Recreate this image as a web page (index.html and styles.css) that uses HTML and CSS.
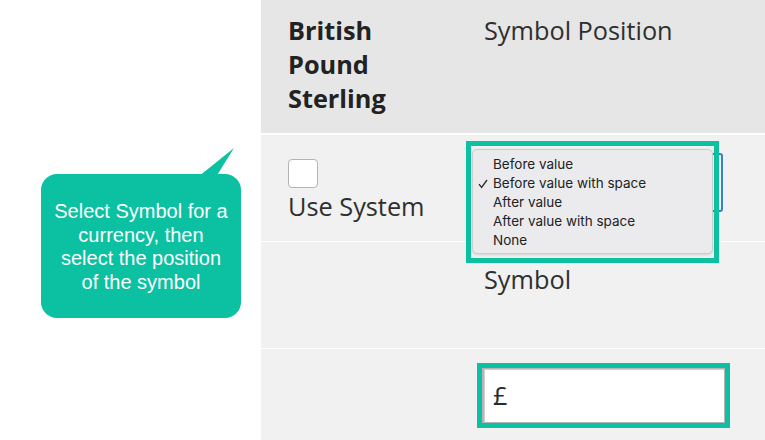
FILE: index.html
```html
<!DOCTYPE html>
<html>
<head>
<meta charset="utf-8">
<link rel="stylesheet" href="styles.css">
</head>
<body>
<div class="page">
  <div class="annot">
    <div class="bubble">
      <svg class="tail" width="40" height="32" viewBox="0 0 40 32"><polygon points="0.7,32 38,2 19.3,32" fill="#0bc1a1"/></svg>
      <p class="bubble-text">Select Symbol for a<br>currency, then<br>select the position<br>of the symbol</p>
    </div>
  </div>
  <div class="table">
    <div class="row head">
      <div class="cell c1"><div class="name">British Pound Sterling</div></div>
      <div class="cell c2"><div class="lbl">Symbol Position</div></div>
    </div>
    <div class="row r1">
      <div class="cell c1"><span class="cb"></span><div class="txt">Use System</div></div>
      <div class="cell c2"><div class="select"></div></div>
    </div>
    <div class="row r2">
      <div class="cell c1"></div>
      <div class="cell c2"><div class="lbl">Symbol</div></div>
    </div>
    <div class="row r3">
      <div class="cell c1"></div>
      <div class="cell c2"><div class="input">£</div></div>
    </div>
  </div>
  <div class="menu-frame">
    <ul class="menu">
      <li>Before value</li>
      <li class="checked"><svg class="check" width="10" height="10" viewBox="0 0 10 10"><polyline points="1,5.2 3.6,8.4 9,1" fill="none" stroke="#2a2a2a" stroke-width="1.3"/></svg>Before value with space</li>
      <li>After value</li>
      <li>After value with space</li>
      <li>None</li>
    </ul>
  </div>
</div>
</body>
</html>
```
FILE: styles.css
```css
* { box-sizing: border-box; }
html, body { margin: 0; padding: 0; background: #fff; }
.page {
  position: relative;
  width: 765px;
  height: 440px;
  overflow: hidden;
  display: flex;
  font-family: "Open Sans", "DejaVu Sans", sans-serif;
}
.annot {
  width: 261px;
  flex: none;
  padding: 174px 0 0 41px;
}
.bubble {
  position: relative;
  width: 200px;
  height: 144px;
  background: #0bc1a1;
  border-radius: 16px;
  display: flex;
  align-items: center;
  justify-content: center;
}
.tail {
  position: absolute;
  left: 155px;
  top: -28px;
}
.bubble-text {
  margin: 0;
  color: #fff;
  font-family: "Liberation Sans", Arial, sans-serif;
  font-size: 20px;
  line-height: 23.5px;
  text-align: center;
  padding-top: 2px;
}
.table {
  flex: 1;
  display: flex;
  flex-direction: column;
  background: #fff;
}
.row {
  display: grid;
  grid-template-columns: 221px 1fr;
  background: #f1f1f1;
}
.head {
  height: 133px;
  background: #e6e6e6;
  margin-bottom: 2px;
}
.r1 { height: 106px; margin-bottom: 1px; }
.r2 { height: 106px; margin-bottom: 1px; }
.r3 { flex: 1; }
.cell { padding: 0; }
.c1 { padding-left: 27px; }
.head .cell { padding-top: 13px; }
.name {
  width: 124px;
  font-weight: 700;
  font-size: 25.3px;
  line-height: 34px;
  color: #222;
}
.lbl {
  padding-left: 2px;
  font-size: 25.3px;
  line-height: 34px;
  color: #2f2f2f;
}
.txt {
  font-size: 25.3px;
  line-height: 34px;
  color: #2f2f2f;
}
.r1 .c1 { padding-top: 24px; }
.cb {
  display: block;
  width: 30px;
  height: 29px;
  border: 1.5px solid #b4b4b4;
  border-radius: 4px;
  background: #fff;
  margin-bottom: 1px;
}
.r1 .c2 { padding-top: 18px; }
.select {
  margin-left: 2px;
  width: 239px;
  height: 59px;
  border: 2px solid #3582c4;
  border-radius: 3px;
  background: #f6f7f7;
}
.r2 .c2 { padding-top: 20px; }
.r3 .c2 { padding-top: 19px; }
.input {
  width: 243px;
  height: 55px;
  background: #fff;
  border: 1px solid #b5b5b5;
  border-left-width: 2px;
  box-shadow: inset 1px 1px 0 #d0d0d0;
  outline: 5px solid #0bc1a1;
  padding-left: 9px;
  font-size: 25.3px;
  line-height: 53px;
  color: #2a2a2a;
}
.menu-frame {
  position: absolute;
  left: 466px;
  top: 141px;
  width: 253px;
  height: 122px;
  border: 5px solid #0bc1a1;
  padding: 3px 1px 0 1px;
}
.menu {
  list-style: none;
  margin: 0;
  padding: 5px 0;
  height: 105px;
  background: #ebebed;
  border: 1px solid #cdcdcf;
  border-radius: 5px;
  box-shadow: 0 1px 3px rgba(0,0,0,0.12);
  font-family: Inter, "Liberation Sans", sans-serif;
  font-size: 13.5px;
  color: #222;
}
.menu li {
  position: relative;
  height: 19px;
  line-height: 19px;
  padding-left: 20px;
}
.check {
  position: absolute;
  left: 5px;
  top: 5px;
}
```
